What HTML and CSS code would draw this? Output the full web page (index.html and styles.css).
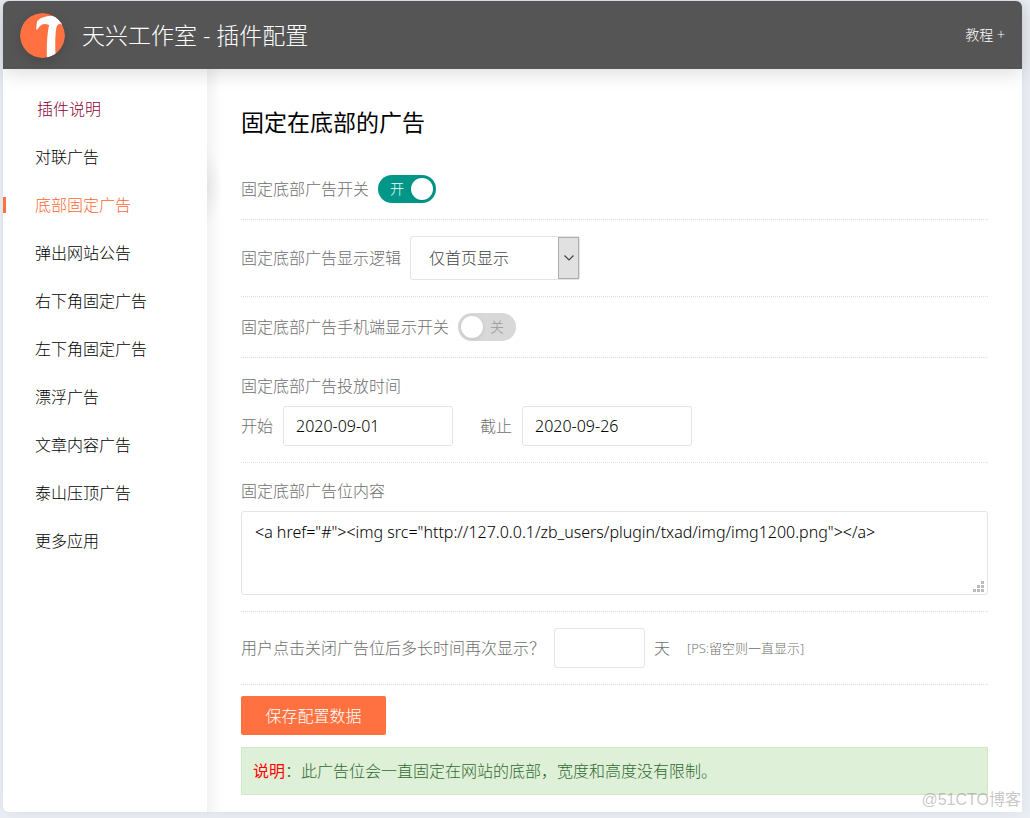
FILE: index.html
```html
<!DOCTYPE html>
<html lang="zh-CN">
<head>
<meta charset="utf-8">
<meta name="viewport" content="width=device-width, initial-scale=1">
<title>天兴工作室 - 插件配置</title>
<link rel="stylesheet" href="styles.css">
</head>
<body>
<div class="panel">
  <header class="header">
    <svg class="logo" viewBox="0 0 45 45" aria-hidden="true">
      <defs><clipPath id="disc"><circle cx="22.500" cy="22.500" r="22.500"/></clipPath></defs>
      <circle cx="22.500" cy="22.500" r="22.500" fill="#ff7140"/>
      <g clip-path="url(#disc)">
        <path fill="#fff" d="M16 16.500L17 8.500C19 5.500 24 3.500 29 3C35 2.500 39.500 4 43 12C39 9.500 37 11.500 36.300 15C35.200 22 35 31 35.500 42L27 46C26.500 35 27 22 29 12C24 9.500 20 11.500 17.500 16.500Z"/>
      </g>
    </svg>
    <h1 class="brand">天兴工作室 - 插件配置</h1>
    <a class="tutorial" href="#">教程 +</a>
  </header>
  <div class="body">
    <nav class="sidebar">
      <a class="nav-item nav-intro" href="#">插件说明</a>
      <a class="nav-item" href="#">对联广告</a>
      <a class="nav-item nav-active" href="#" aria-current="page">底部固定广告</a>
      <a class="nav-item" href="#">弹出网站公告</a>
      <a class="nav-item" href="#">右下角固定广告</a>
      <a class="nav-item" href="#">左下角固定广告</a>
      <a class="nav-item" href="#">漂浮广告</a>
      <a class="nav-item" href="#">文章内容广告</a>
      <a class="nav-item" href="#">泰山压顶广告</a>
      <a class="nav-item" href="#">更多应用</a>
    </nav>
    <main class="content">
      <h2 class="title">固定在底部的广告</h2>
      <form class="form">
        <div class="row">
          <label for="enabled">固定底部广告开关</label>
          <span class="switch">
            <input id="enabled" type="checkbox" checked>
            <span class="switch-text">开</span>
          </span>
        </div>
        <div class="row">
          <label for="logic">固定底部广告显示逻辑</label>
          <span class="select">
            <select id="logic"><option>仅首页显示</option><option>全站显示</option></select>
            <span class="select-arrow"><svg width="10" height="6" viewBox="0 0 10 6" aria-hidden="true"><path d="M0.500 0.500L5 5L9.500 0.500" fill="none" stroke="#444" stroke-width="1.200"/></svg></span>
          </span>
        </div>
        <div class="row">
          <label for="mobile">固定底部广告手机端显示开关</label>
          <span class="switch">
            <input id="mobile" type="checkbox">
            <span class="switch-text">关</span>
          </span>
        </div>
        <div class="row row-stack">
          <span>固定底部广告投放时间</span>
          <div class="dates">
            <span class="date"><label for="start">开始</label><input class="field field-date" id="start" type="text" value="2020-09-01"></span>
            <span class="date"><label for="end">截止</label><input class="field field-date" id="end" type="text" value="2020-09-26"></span>
          </div>
        </div>
        <div class="row row-stack">
          <label for="code">固定底部广告位内容</label>
          <div class="code">
            <textarea class="field field-code" id="code" spellcheck="false">&lt;a href="#"&gt;&lt;img src="http://127.0.0.1/zb_users/plugin/txad/img/img1200.png"&gt;&lt;/a&gt;</textarea>
            <svg class="grip" width="11" height="11" viewBox="0 0 11 11" aria-hidden="true"><path fill="#bbb" d="M8 0h3v3h-3zM4 4h3v3h-3zM8 4h3v3h-3zM0 8h3v3h-3zM4 8h3v3h-3zM8 8h3v3h-3z"/></svg>
          </div>
        </div>
        <div class="row">
          <label for="days">用户点击关闭广告位后多长时间再次显示？</label>
          <input class="field field-days" id="days" type="text">
          <span>天</span>
          <small class="hint">[PS:留空则一直显示]</small>
        </div>
        <button class="save" type="submit">保存配置数据</button>
      </form>
      <p class="notice"><span class="notice-label">说明</span>：此广告位会一直固定在网站的底部，宽度和高度没有限制。</p>
    </main>
  </div>
</div>
<div class="watermark">@51CTO博客</div>
</body>
</html>
```

FILE: styles.css
```css
* {
  box-sizing: border-box;
}

body {
  position: relative;
  margin: 0;
  min-height: 100vh;
  padding: 1px 8px 6px 3px;
  display: flex;
  flex-direction: column;
  background: #ebeff4;
  color: #6e6e6e;
  font: 300 16px/24px "Open Sans", "Noto Sans CJK SC", sans-serif;
}

input,
select,
textarea,
button {
  font: inherit;
}

a {
  color: inherit;
  text-decoration: none;
}

.panel {
  flex: 1;
  display: flex;
  flex-direction: column;
  background: #fff;
  border-radius: 6px;
  box-shadow: 0 0 16px rgba(60, 80, 110, 0.1);
}

.header {
  position: relative;
  display: flex;
  align-items: center;
  gap: 17px;
  height: 68px;
  padding: 0 17px;
  background: #555;
  color: #fff;
  border-radius: 6px 6px 0 0;
  box-shadow: 0 4px 20px rgba(0, 0, 0, 0.14);
}

.logo {
  width: 45px;
  height: 45px;
  border-radius: 50%;
  box-shadow: 0 4px 12px rgba(0, 0, 0, 0.15);
}

.brand {
  flex: 1;
  margin: 0;
  font-size: 23px;
  font-weight: 300;
  line-height: 32px;
}

.tutorial {
  font-size: 14px;
}

.body {
  flex: 1;
  display: flex;
}

.sidebar {
  flex: none;
  width: 204px;
  padding-top: 16px;
  color: #000;
}

.nav-item {
  display: flex;
  align-items: center;
  height: 48px;
  padding-left: 32px;
}

.nav-intro {
  padding-left: 34px;
  color: #880033;
}

.nav-active {
  color: #ff6630;
  background: linear-gradient(#ff7140, #ff7140) left center / 3px 16px no-repeat;
}

.content {
  flex: 1;
  min-width: 0;
  padding: 37px 34px 17px;
  background:
    radial-gradient(ellipse at left, rgba(0, 0, 0, 0.06), transparent 70%) 0 80px / 16px 76px no-repeat,
    linear-gradient(to right, #f2f2f2, #fff 14px);
}

.title {
  margin: 0 0 21px;
  color: #000;
  font-size: 23px;
  font-weight: 400;
  line-height: 32px;
}

.row {
  display: flex;
  align-items: center;
  gap: 9px;
  padding: 16px 0;
  border-bottom: 1px dotted #ddd;
}

.row-stack {
  flex-direction: column;
  align-items: stretch;
  gap: 8px;
}

.switch {
  position: relative;
  display: flex;
  width: 58px;
  height: 28px;
}

.switch input {
  appearance: none;
  width: 100%;
  height: 100%;
  margin: 0;
  padding: 3px;
  display: flex;
  background: #d8d8d8;
  border-radius: 14px;
}

.switch input::before {
  content: "";
  width: 22px;
  height: 22px;
  border-radius: 50%;
  background: #fff;
  box-shadow: 0 1px 4px rgba(0, 0, 0, 0.1);
}

.switch input:checked {
  justify-content: flex-end;
  background: #009688;
}

.switch-text {
  position: absolute;
  top: 2px;
  right: 12px;
  color: #999;
  font-size: 14px;
  pointer-events: none;
}

.switch input:checked + .switch-text {
  right: auto;
  left: 12px;
  color: #fff;
}

.select {
  position: relative;
  display: flex;
  width: 170px;
  height: 44px;
}

.select select {
  appearance: none;
  width: 100%;
  padding: 0 18px;
  color: #444;
  background: #fff;
  border: 1px solid #e4e4e4;
  border-radius: 3px;
}

.select-arrow {
  position: absolute;
  top: 1px;
  right: 1px;
  bottom: 1px;
  width: 21px;
  display: flex;
  align-items: center;
  justify-content: center;
  background: #e1e1e1;
  border: 1px solid #adadad;
  pointer-events: none;
}

.dates {
  display: flex;
  gap: 27px;
}

.date {
  display: flex;
  align-items: center;
  gap: 10px;
}

.field {
  height: 40px;
  padding: 0 12px;
  color: #000;
  background: #fff;
  border: 1px solid #e4e4e4;
  border-radius: 3px;
  font-family: "Noto Sans", "Noto Sans CJK SC", sans-serif;
}

.field-date {
  width: 170px;
}

.code {
  position: relative;
  display: flex;
}

.field-code {
  width: 100%;
  height: 84px;
  padding: 8px 13px;
  resize: none;
}

.grip {
  position: absolute;
  right: 4px;
  bottom: 3px;
}

.field-days {
  width: 91px;
}

.hint {
  margin-left: 8px;
  font-size: 13px;
}

.save {
  display: block;
  margin: 11px 0 12px;
  width: 145px;
  height: 39px;
  padding: 0;
  color: #fff;
  background: #ff7140;
  border: 0;
  border-radius: 2px;
}

.notice {
  margin: 0;
  padding: 11px;
  color: #2f6a30;
  background: #dff0d8;
  border: 1px solid #d0e9c6;
}

.notice-label {
  color: #f00;
  font-weight: 400;
}

.watermark {
  position: absolute;
  right: 9px;
  bottom: 6px;
  color: rgba(130, 130, 130, 0.45);
  font: 400 16px/24px "Liberation Sans", "Noto Sans CJK SC", sans-serif;
}
```
